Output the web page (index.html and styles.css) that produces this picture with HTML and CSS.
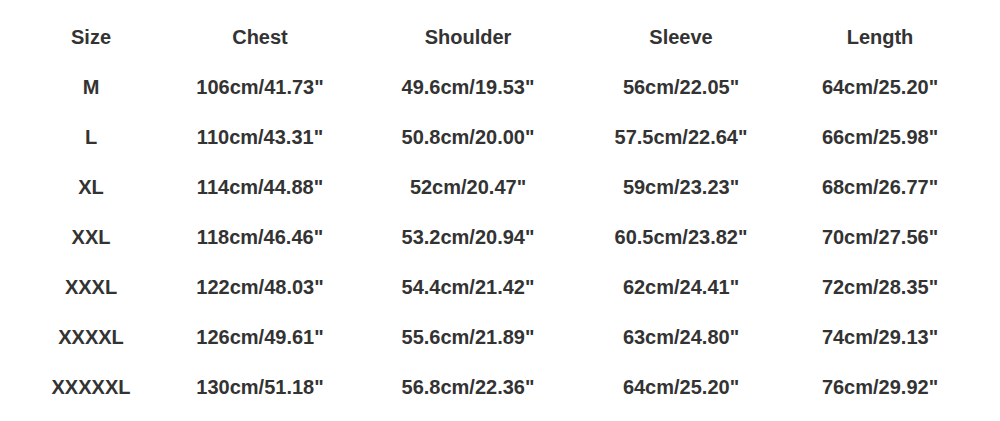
FILE: index.html
```html
<!DOCTYPE html>
<html>
<head>
<meta charset="utf-8">
<link rel="stylesheet" href="styles.css">
</head>
<body>
<div class="table">
  <div class="cell">Size</div><div class="cell">Chest</div><div class="cell">Shoulder</div><div class="cell">Sleeve</div><div class="cell">Length</div>
  <div class="cell">M</div><div class="cell">106cm/41.73"</div><div class="cell">49.6cm/19.53"</div><div class="cell">56cm/22.05"</div><div class="cell">64cm/25.20"</div>
  <div class="cell">L</div><div class="cell">110cm/43.31"</div><div class="cell">50.8cm/20.00"</div><div class="cell">57.5cm/22.64"</div><div class="cell">66cm/25.98"</div>
  <div class="cell">XL</div><div class="cell">114cm/44.88"</div><div class="cell">52cm/20.47"</div><div class="cell">59cm/23.23"</div><div class="cell">68cm/26.77"</div>
  <div class="cell">XXL</div><div class="cell">118cm/46.46"</div><div class="cell">53.2cm/20.94"</div><div class="cell">60.5cm/23.82"</div><div class="cell">70cm/27.56"</div>
  <div class="cell">XXXL</div><div class="cell">122cm/48.03"</div><div class="cell">54.4cm/21.42"</div><div class="cell">62cm/24.41"</div><div class="cell">72cm/28.35"</div>
  <div class="cell">XXXXL</div><div class="cell">126cm/49.61"</div><div class="cell">55.6cm/21.89"</div><div class="cell">63cm/24.80"</div><div class="cell">74cm/29.13"</div>
  <div class="cell">XXXXXL</div><div class="cell">130cm/51.18"</div><div class="cell">56.8cm/22.36"</div><div class="cell">64cm/25.20"</div><div class="cell">76cm/29.92"</div>
</div>
</body>
</html>
```
FILE: styles.css
```css
html, body {
  margin: 0;
  background: #fff;
}
body {
  width: 1000px;
  height: 421px;
  overflow: hidden;
  font-family: "Liberation Sans", Arial, sans-serif;
  font-weight: bold;
  font-size: 20px;
  color: #333;
}
.table {
  padding-top: 12px;
  display: grid;
  grid-template-columns: 182px 156px 260px 166px 232px;
  grid-auto-rows: 50px;
}
.cell {
  display: flex;
  align-items: center;
  justify-content: center;
  white-space: nowrap;
}
```
